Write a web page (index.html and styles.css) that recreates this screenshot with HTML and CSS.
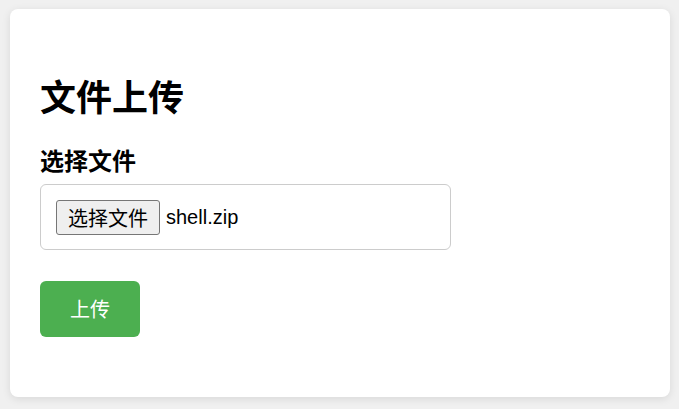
FILE: index.html
```html
<!DOCTYPE html>
<html lang="zh-CN">
<head>
<meta charset="utf-8">
<title>文件上传</title>
<link rel="stylesheet" href="styles.css">
</head>
<body>
<main class="card">
  <h1 class="title">文件上传</h1>
  <form class="form">
    <label class="label">选择文件</label>
    <div class="file-box">
      <span class="file-btn">选择文件</span>
      <span class="file-name">shell.zip</span>
    </div>
    <button type="button" class="submit">上传</button>
  </form>
</main>
</body>
</html>
```

FILE: styles.css
```css
html, body {
  margin: 0;
  padding: 0;
}
body {
  background: #f0f0f0;
  padding: 9px 9px 9px 10px;
  font-family: "Liberation Sans", "Noto Sans CJK SC", sans-serif;
  color: #000;
}
.card {
  background: #fff;
  border-radius: 8px;
  box-shadow: 0 2px 8px rgba(0, 0, 0, 0.1);
  padding: 65px 30px 60px;
}
.title {
  margin: 0 0 28px;
  font-size: 36px;
  line-height: 43px;
  font-weight: bold;
  font-family: "Noto Sans CJK SC", sans-serif;
}
.form {
  display: flex;
  flex-direction: column;
  align-items: flex-start;
}
.label {
  font-size: 24px;
  line-height: 29px;
  font-weight: bold;
  font-family: "Noto Sans CJK SC", sans-serif;
  margin-bottom: 10px;
}
.file-box {
  box-sizing: border-box;
  width: 411px;
  height: 66px;
  border: 1px solid #ccc;
  border-radius: 6px;
  padding: 15px;
  display: flex;
  align-items: center;
  gap: 6px;
  font-size: 20px;
}
.file-btn {
  box-sizing: border-box;
  height: 35px;
  display: inline-flex;
  align-items: center;
  padding: 0 11px;
  border: 1px solid #767676;
  border-radius: 3px;
  background: #efefef;
  font-family: "Noto Sans CJK SC", sans-serif;
  font-size: 20px;
}
.file-name {
  font-family: "Liberation Sans", sans-serif;
  font-size: 20px;
}
.submit {
  box-sizing: border-box;
  margin-top: 31px;
  border: none;
  border-radius: 6px;
  background: #4caf50;
  color: #fff;
  font-family: "Noto Sans CJK SC", sans-serif;
  font-size: 20px;
  line-height: 26px;
  padding: 0;
  white-space: nowrap;
  width: 100px;
  height: 56px;
}
```
